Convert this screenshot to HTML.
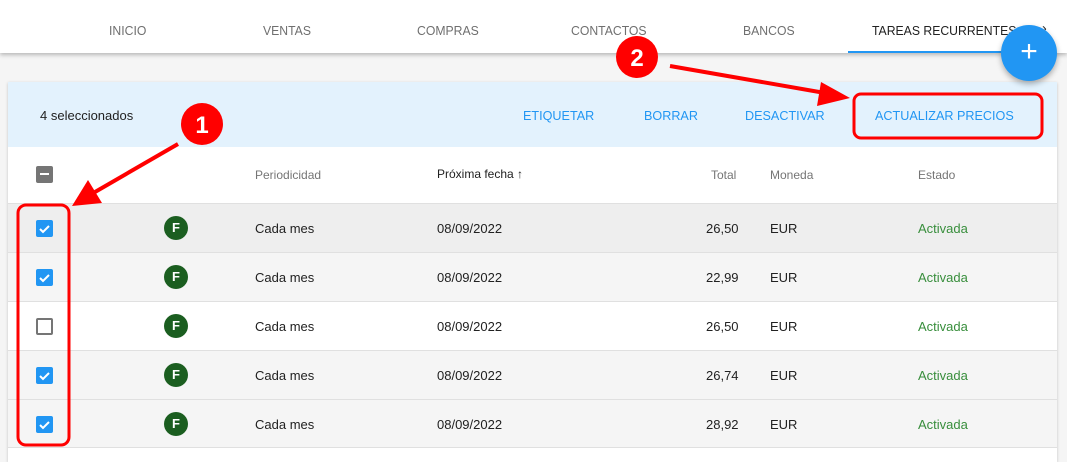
<!DOCTYPE html>
<html><head><meta charset="utf-8"><style>
*{box-sizing:border-box;margin:0;padding:0}
body{width:1067px;height:451px;overflow:hidden;background:#f5f5f5;font-family:"Liberation Sans",sans-serif;position:relative}
.nav{position:absolute;left:0;top:0;width:1067px;height:53px;background:#fff;box-shadow:0 2px 4px rgba(0,0,0,.25)}
.tab{position:absolute;top:23px;font-size:13px;color:#6f6f6f;transform:scaleX(.94);transform-origin:left}
.card{position:absolute;left:8px;top:82px;width:1049px;height:380px;background:#fff;box-shadow:0 1px 3px rgba(0,0,0,.2)}
.band{position:absolute;left:0;top:0;width:1049px;height:65px;background:#e3f2fd}
.t{position:absolute;font-size:13px;color:#212121;white-space:nowrap}
.b{color:#2196f3;font-size:13px;transform:scaleX(.97);transform-origin:left}
.h{color:#757575;font-size:12px}
.row{position:absolute;left:0;width:1049px;height:49px;border-top:1px solid #e0e0e0}
.cb{position:absolute;left:28px;top:16px;width:17px;height:17px;border-radius:2px;background:#2196f3}
.cb.off{background:#fff;border:2px solid #757575}
.av{position:absolute;left:156px;top:12px;width:24px;height:24px;border-radius:50%;background:#1b5e20;color:#fff;font-weight:bold;font-size:13px;text-align:center;line-height:24px}
.row .t{top:17px}
.g{color:#388e3c}
</style></head><body>
<div class="nav">
<span class="tab" style="left:109px">INICIO</span>
<span class="tab" style="left:263px">VENTAS</span>
<span class="tab" style="left:417px">COMPRAS</span>
<span class="tab" style="left:571px">CONTACTOS</span>
<span class="tab" style="left:743px">BANCOS</span>
<span class="tab" style="left:872px;color:#212121">TAREAS RECURRENTES</span>
<span class="tab" style="left:1042px;color:#212121;font-size:15px;top:20px">›</span>
<div style="position:absolute;left:848px;top:51px;width:164px;height:2px;background:#2196f3"></div>
</div>
<div class="card">
<div class="band"></div>
<span class="t" style="left:32px;top:26px">4 seleccionados</span>
<span class="t b" style="left:515px;top:26px">ETIQUETAR</span>
<span class="t b" style="left:636px;top:26px">BORRAR</span>
<span class="t b" style="left:737px;top:26px">DESACTIVAR</span>
<span class="t b" style="left:867px;top:26px">ACTUALIZAR PRECIOS</span>
<div style="position:absolute;left:28px;top:84px;width:17px;height:17px;border-radius:2px;background:#757575"><div style="position:absolute;left:4px;top:7px;width:9px;height:2px;background:#fff"></div></div>
<span class="t h" style="left:247px;top:86px">Periodicidad</span>
<span class="t" style="left:429px;top:85px;font-size:12px">Próxima fecha ↑</span>
<span class="t h" style="left:703px;top:86px">Total</span>
<span class="t h" style="left:762px;top:86px">Moneda</span>
<span class="t h" style="left:910px;top:86px">Estado</span>
<div class="row" style="top:121px;background:#eeeeee"><div class="cb"><svg width="17" height="17"><path d="M4 9l3 3 6-6" stroke="#fff" stroke-width="2" fill="none"/></svg></div><div class="av">F</div><span class="t" style="left:247px">Cada mes</span><span class="t" style="left:429px">08/09/2022</span><span class="t" style="left:698px">26,50</span><span class="t" style="left:762px">EUR</span><span class="t g" style="left:910px">Activada</span></div>
<div class="row" style="top:170px;background:#f5f5f5"><div class="cb"><svg width="17" height="17"><path d="M4 9l3 3 6-6" stroke="#fff" stroke-width="2" fill="none"/></svg></div><div class="av">F</div><span class="t" style="left:247px">Cada mes</span><span class="t" style="left:429px">08/09/2022</span><span class="t" style="left:698px">22,99</span><span class="t" style="left:762px">EUR</span><span class="t g" style="left:910px">Activada</span></div>
<div class="row" style="top:219px;background:#fff"><div class="cb off"></div><div class="av">F</div><span class="t" style="left:247px">Cada mes</span><span class="t" style="left:429px">08/09/2022</span><span class="t" style="left:698px">26,50</span><span class="t" style="left:762px">EUR</span><span class="t g" style="left:910px">Activada</span></div>
<div class="row" style="top:268px;background:#f5f5f5"><div class="cb"><svg width="17" height="17"><path d="M4 9l3 3 6-6" stroke="#fff" stroke-width="2" fill="none"/></svg></div><div class="av">F</div><span class="t" style="left:247px">Cada mes</span><span class="t" style="left:429px">08/09/2022</span><span class="t" style="left:698px">26,74</span><span class="t" style="left:762px">EUR</span><span class="t g" style="left:910px">Activada</span></div>
<div class="row" style="top:317px;background:#f5f5f5;border-bottom:1px solid #e0e0e0"><div class="cb"><svg width="17" height="17"><path d="M4 9l3 3 6-6" stroke="#fff" stroke-width="2" fill="none"/></svg></div><div class="av">F</div><span class="t" style="left:247px">Cada mes</span><span class="t" style="left:429px">08/09/2022</span><span class="t" style="left:698px">28,92</span><span class="t" style="left:762px">EUR</span><span class="t g" style="left:910px">Activada</span></div>
</div>
<div style="position:absolute;left:1001px;top:25px;width:56px;height:56px;border-radius:50%;background:#2196f3;box-shadow:0 3px 6px rgba(0,0,0,.3);color:#fff;font-size:30px;text-align:center;line-height:54px">+</div>
<svg width="1067" height="451" style="position:absolute;left:0;top:0">
<rect x="18" y="205" width="51" height="240" rx="8" fill="none" stroke="#f00" stroke-width="3"/>
<rect x="854" y="94" width="188" height="44" rx="7" fill="none" stroke="#f00" stroke-width="3"/>
<line x1="178" y1="144" x2="95" y2="192" stroke="#f00" stroke-width="4"/>
<polygon points="72,206 88,180 102,203" fill="#f00"/>
<line x1="670" y1="66" x2="825" y2="93" stroke="#f00" stroke-width="4"/>
<polygon points="850,98 821,82 817,106" fill="#f00"/>
<circle cx="202" cy="124" r="21" fill="#f00"/>
<circle cx="637" cy="57" r="21" fill="#f00"/>
<text x="202" y="133" font-family="Liberation Sans" font-weight="bold" font-size="24" fill="#fff" text-anchor="middle">1</text>
<text x="637" y="66" font-family="Liberation Sans" font-weight="bold" font-size="24" fill="#fff" text-anchor="middle">2</text>
</svg>
</body></html>
